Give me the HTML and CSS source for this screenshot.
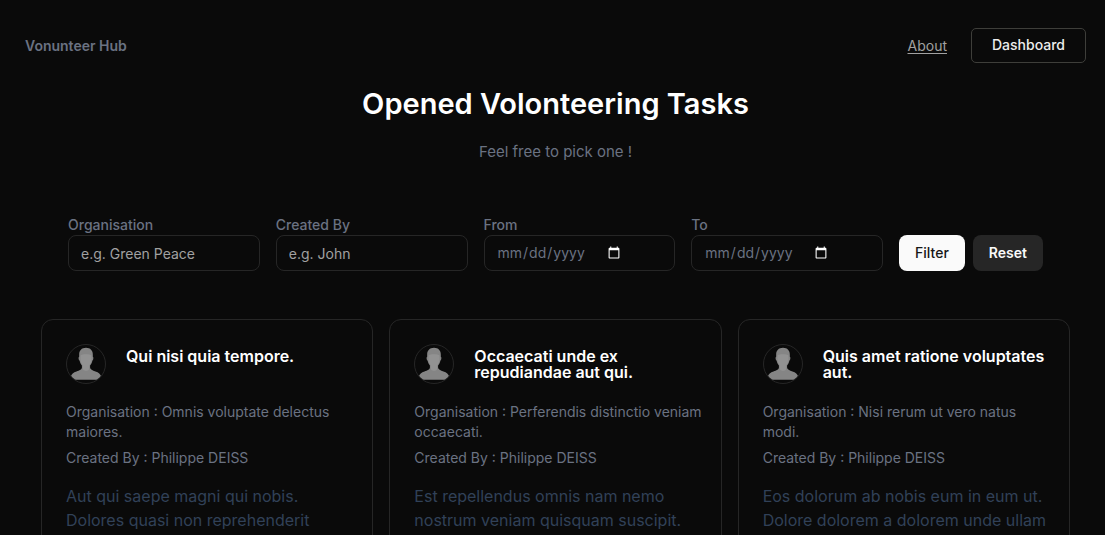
FILE: index.html
```html
<!DOCTYPE html>
<html lang="en">
<head>
<meta charset="utf-8">
<meta name="viewport" content="width=device-width, initial-scale=1">
<title>Vonunteer Hub</title>
<link rel="stylesheet" href="styles.css">
</head>
<body>
<svg class="sprite" aria-hidden="true">
  <symbol id="person" viewBox="0 0 40 40">
    <path class="person-body" d="M20 3c-4.600 0-7.200 2.900-7.200 7.200v2.200c-.9.200-.8 3.400.5 4.200.5 2.400 1.300 3.800 2.400 4.900v2.300c0 2.200-2.600 3.100-5.700 4-3.200.9-5.400 3-6 5.400 1.200 1.800 2.300 2.900 3.200 3.400h25.600c1-.6 2.100-1.800 3.200-3.400-.6-2.400-2.800-4.500-6-5.400-3.100-.9-5.700-1.800-5.700-4v-2.300c1.100-1.100 1.900-2.500 2.400-4.900 1.300-.8 1.400-4 .5-4.200v-2.200C27.200 5.900 24.600 3 20 3z"/>
    <path class="person-face" d="M14.200 11c1.500-1.800 10.100-1.800 11.600 0v5c-.5 2.800-1.400 4.500-2.500 5.500v4.300c-1.700 1.800-4.900 1.800-6.600 0v-4.300c-1.100-1-2-2.700-2.500-5.500z"/>
  </symbol>
</svg>
<header class="topbar">
  <span class="brand">Vonunteer Hub</span>
  <nav class="nav">
    <a class="nav-link" href="#about">About</a>
    <a class="nav-button" href="#dashboard">Dashboard</a>
  </nav>
</header>
<main>
  <div class="intro">
    <h1 class="title">Opened Volonteering Tasks</h1>
    <p class="subtitle">Feel free to pick one !</p>
  </div>
  <form class="filters">
    <div class="field"><label for="organisation">Organisation</label><input id="organisation" type="text" placeholder="e.g. Green Peace"></div>
    <div class="field"><label for="creator">Created By</label><input id="creator" type="text" placeholder="e.g. John"></div>
    <div class="field"><label for="from">From</label><input id="from" type="date"></div>
    <div class="field"><label for="to">To</label><input id="to" type="date"></div>
    <div class="actions">
      <button class="button button-primary" type="submit">Filter</button>
      <button class="button button-secondary" type="reset">Reset</button>
    </div>
  </form>
  <section class="cards">
    <article class="card">
      <div class="card-head">
        <svg class="avatar" role="img" aria-label="Avatar"><use href="#person"/></svg>
        <h2 class="card-title">Qui nisi quia tempore.</h2>
      </div>
      <div class="meta"><p>Organisation : Omnis voluptate delectus maiores.</p><p>Created By : Philippe DEISS</p></div>
      <p class="description">Aut qui saepe magni qui nobis. Dolores quasi non reprehenderit</p>
    </article>
    <article class="card">
      <div class="card-head">
        <svg class="avatar" role="img" aria-label="Avatar"><use href="#person"/></svg>
        <h2 class="card-title">Occaecati unde ex repudiandae aut qui.</h2>
      </div>
      <div class="meta"><p>Organisation : Perferendis distinctio veniam occaecati.</p><p>Created By : Philippe DEISS</p></div>
      <p class="description">Est repellendus omnis nam nemo nostrum veniam quisquam suscipit.</p>
    </article>
    <article class="card">
      <div class="card-head">
        <svg class="avatar" role="img" aria-label="Avatar"><use href="#person"/></svg>
        <h2 class="card-title">Quis amet ratione voluptates aut.</h2>
      </div>
      <div class="meta"><p>Organisation : Nisi rerum ut vero natus modi.</p><p>Created By : Philippe DEISS</p></div>
      <p class="description">Eos dolorum ab nobis eum in eum ut. Dolore dolorem a dolorem unde ullam</p>
    </article>
  </section>
</main>
</body>
</html>
```
FILE: styles.css
```css
* { box-sizing: border-box; }

body {
  margin: 0;
  padding: 28px 19px 0 25px;
  background: #0a0a0a;
  color: #6a7282;
  color-scheme: dark;
  font-family: Inter, "Liberation Sans", sans-serif;
  font-size: 14px;
  line-height: 20px;
}

h1, h2, p { margin: 0; }

.sprite { position: absolute; width: 0; height: 0; }
.person-body { fill: #858585; }
.person-face { fill: #929292; }

.topbar { display: flex; align-items: center; justify-content: space-between; }
.brand { font-weight: 600; }
.nav { display: flex; align-items: center; gap: 24px; }
.nav-link { color: #a1a1a1; text-decoration: underline; text-underline-offset: 2px; }
.nav-button {
  padding: 6px 20px 7px;
  border: 1px solid #3e3e3a;
  border-radius: 5px;
  color: #ededec;
  font-weight: 500;
  text-decoration: none;
}

.intro { padding-top: 21px; text-align: center; }
.title { color: #fff; font-size: 29px; font-weight: 600; line-height: 40px; }
.subtitle { margin-top: 16px; font-size: 15px; line-height: 24px; }

.filters {
  display: flex;
  align-items: flex-end;
  gap: 16px;
  margin: 51px 43px 0;
}
.field { display: flex; flex: 1; flex-direction: column; min-width: 0; }
.field label { font-weight: 500; }
.field input {
  width: 100%;
  height: 36px;
  padding: 4px 12px;
  border: 1px solid #262626;
  border-radius: 8px;
  background: transparent;
  color: #6a7282;
  font: inherit;
}
.field input::placeholder { color: #a1a1a1; }
.field input::-webkit-datetime-edit { flex: none; }
.field input::-webkit-calendar-picker-indicator { margin-inline-start: 0; }

.actions { display: flex; gap: 8px; }
.button {
  height: 36px;
  padding: 0 16px;
  border: 0;
  border-radius: 8px;
  font: inherit;
}
.button-primary { background: #fafafa; color: #171717; font-weight: 500; }
.button-secondary { background: #262626; color: #fafafa; font-weight: 600; }

.cards {
  display: grid;
  grid-template-columns: repeat(3, 1fr);
  gap: 16px;
  margin: 48px 16px 24px;
}
.card { padding: 24px 16px 24px 24px; border: 1px solid #262626; border-radius: 12px; }
.card-head { display: flex; gap: 20px; }
.avatar { flex: none; width: 40px; height: 40px; border: 1px solid #262626; border-radius: 50%; }
.card-title { padding-top: 4px; color: #fff; font-size: 16px; font-weight: 600; line-height: 16px; }
.meta { display: grid; gap: 6px; margin-top: 18px; }
.description { margin-top: 16px; color: #314158; font-size: 16px; line-height: 24px; }
```
